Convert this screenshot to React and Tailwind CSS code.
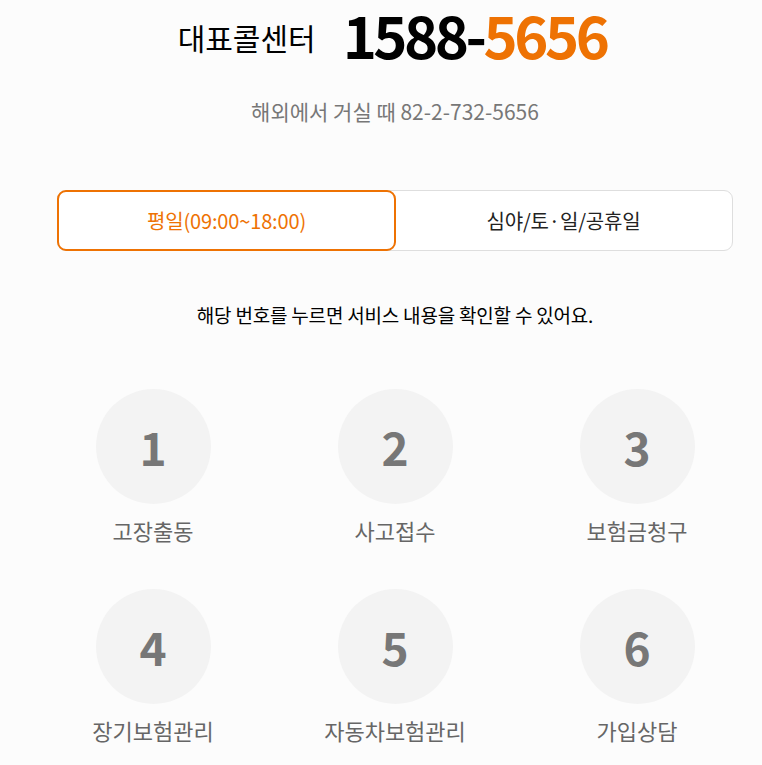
const menus = [
  { no: 1, label: "고장출동" },
  { no: 2, label: "사고접수" },
  { no: 3, label: "보험금청구" },
  { no: 4, label: "장기보험관리" },
  { no: 5, label: "자동차보험관리" },
  { no: 6, label: "가입상담" },
]

export default function App() {
  return (
    <div
      className="min-h-screen bg-[#fcfcfc] overflow-hidden"
      style={{ fontFamily: '"Noto Sans CJK KR", "Noto Sans", sans-serif' }}
    >
      <div className="w-[726px] ml-[32px]">

        {/* Call center */}
        <div className="flex items-end justify-center gap-[27px] h-[70px]">
          <span className="text-[30px] text-black leading-[1.2] mb-[15px]">대표콜센터</span>
          <p className="flex text-[58px] font-bold tracking-[-3.5px] leading-[1.2]">
            <span className="inline-block text-black pr-[4px]">1588-</span>
            <span className="inline-block text-[#ee7203] ml-[-4px] pr-[6px]">5656</span>
          </p>
        </div>

        <p className="mt-[31px] text-center text-[21px] text-[#777] leading-none">
          해외에서 거실 때 82-2-732-5656
        </p>

        {/* Tabs */}
        <div className="mx-[25px] mt-[68px] flex h-[61px] bg-white border border-[#dedede] rounded-[9px]">
          <button className="w-[339px] -m-px border-2 border-[#ee7203] rounded-[9px] bg-white text-[20px] text-[#ee7203] tracking-[-0.15px]">
            평일(09:00~18:00)
          </button>
          <button className="flex-1 text-[20px] text-[#222] tracking-[-0.15px]">
            심야/토·일/공휴일
          </button>
        </div>

        <p className="mt-[54px] text-center text-[19px] text-black tracking-[-0.2px] leading-none">
          해당 번호를 누르면 서비스 내용을 확인할 수 있어요.
        </p>

        {/* Number menu */}
        <div className="mt-[65px] grid grid-cols-3 gap-y-[44px]">
          {menus.map((m) => (
            <div key={m.no} className="flex flex-col items-center">
              <div className="w-[115px] h-[115px] rounded-full bg-[#f3f3f3] flex items-center justify-center text-[46px] font-bold text-[#777]">
                {m.no}
              </div>
              <span className="mt-[11px] text-[22px] text-[#666] leading-[30px]">{m.label}</span>
            </div>
          ))}
        </div>

      </div>
    </div>
  )
}
